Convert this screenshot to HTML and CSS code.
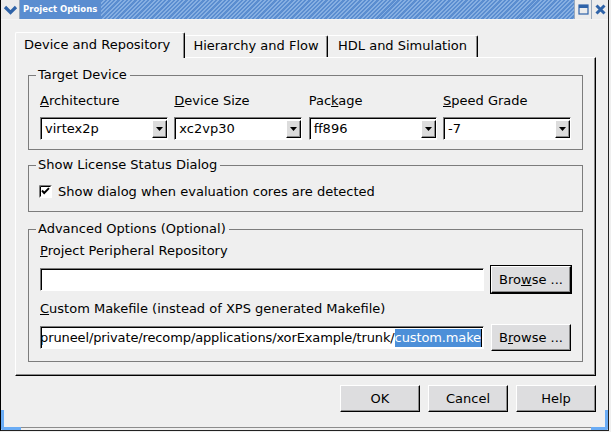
FILE: index.html
```html
<!DOCTYPE html>
<html>
<head>
<meta charset="utf-8">
<title>Project Options</title>
<link rel="stylesheet" href="styles.css">
</head>
<body>
<div class="window">
  <div class="titlebar">
    <div class="tb-menu">
      <svg width="15" height="12" viewBox="0 0 15 12"><path d="M2 3 L7.5 8.5 L13 3" fill="none" stroke="#2f63a8" stroke-width="3.2"/></svg>
    </div>
    <div class="tb-title">Project Options</div>
    <div class="tb-stripes"></div>
    <div class="tb-btn">
      <svg width="11" height="11" viewBox="0 0 11 11"><rect x="1" y="1" width="9" height="9" fill="none" stroke="#2f63a8" stroke-width="1.2"/><rect x="1" y="1" width="9" height="3" fill="#2f63a8"/></svg>
    </div>
    <div class="tb-btn">
      <svg width="11" height="11" viewBox="0 0 11 11"><path d="M1.5 1.5 L9.5 9.5 M9.5 1.5 L1.5 9.5" stroke="#2f63a8" stroke-width="3"/></svg>
    </div>
  </div>

  <div class="client">
    <div class="tabs">
      <div class="tab tab-1 active">Device and Repository</div>
      <div class="tab tab-2">Hierarchy and Flow</div>
      <div class="tab tab-3">HDL and Simulation</div>
    </div>

    <div class="panel">
      <fieldset class="group g-target">
        <legend>Target Device</legend>
        <div class="combo-grid">
          <div class="field">
            <div class="label"><u>A</u>rchitecture</div>
            <div class="combo"><span class="combo-text">virtex2p</span><span class="arrow"><svg width="7" height="4" viewBox="0 0 7 4"><polygon points="0,0 7,0 3.5,4" fill="#000"/></svg></span></div>
          </div>
          <div class="field">
            <div class="label"><u>D</u>evice Size</div>
            <div class="combo"><span class="combo-text">xc2vp30</span><span class="arrow"><svg width="7" height="4" viewBox="0 0 7 4"><polygon points="0,0 7,0 3.5,4" fill="#000"/></svg></span></div>
          </div>
          <div class="field">
            <div class="label">Pac<u>k</u>age</div>
            <div class="combo"><span class="combo-text">ff896</span><span class="arrow"><svg width="7" height="4" viewBox="0 0 7 4"><polygon points="0,0 7,0 3.5,4" fill="#000"/></svg></span></div>
          </div>
          <div class="field">
            <div class="label"><u>S</u>peed Grade</div>
            <div class="combo"><span class="combo-text">-7</span><span class="arrow"><svg width="7" height="4" viewBox="0 0 7 4"><polygon points="0,0 7,0 3.5,4" fill="#000"/></svg></span></div>
          </div>
        </div>
      </fieldset>

      <fieldset class="group g-license">
        <legend>Show License Status Dialog</legend>
        <div class="check-row">
          <svg class="checkbox" width="13" height="13" viewBox="0 0 13 13">
            <rect x="0" y="0" width="13" height="13" fill="#fff"/>
            <path d="M0.5 12.5 V0.5 H12.5" fill="none" stroke="#7c7c7c"/>
            <path d="M1.5 11.5 V1.5 H11.5" fill="none" stroke="#000"/>
            <path d="M3 5.5 L5.2 8 L10 3.2" fill="none" stroke="#000" stroke-width="1.9"/>
          </svg>
          <span>Show dialog when evaluation cores are detected</span>
        </div>
      </fieldset>

      <fieldset class="group g-adv">
        <legend>Advanced Options (Optional)</legend>
        <div class="label adv-label-1"><u>P</u>roject Peripheral Repository</div>
        <div class="file-row">
          <div class="input"></div>
          <button class="btn browse focused">Bro<u>w</u>se ...</button>
        </div>
        <div class="label adv-label-2"><u>C</u>ustom Makefile (instead of XPS generated Makefile)</div>
        <div class="file-row">
          <div class="input path"><span class="path-text">/home/pruneel/private/recomp/applications/xorExample/trunk/<span class="sel">custom.make</span></span><span class="caret"></span></div>
          <button class="btn browse">B<u>r</u>owse ...</button>
        </div>
      </fieldset>
    </div>

    <div class="actions">
      <button class="btn">OK</button>
      <button class="btn">Cancel</button>
      <button class="btn">Help</button>
    </div>
  </div>

  <div class="grip grip-left"></div>
  <div class="grip grip-right"></div>
</div>
</body>
</html>
```

FILE: styles.css
```css
html, body {
  margin: 0;
  padding: 0;
}

body {
  background: #efefef;
  font-family: "DejaVu Sans", "Noto Sans", sans-serif;
  font-size: 13px;
  color: #000;
}

.window {
  position: relative;
  width: 609px;
  height: 431px;
  box-sizing: border-box;
  border-left: 1px solid #000;
  border-right: 1px solid #222;
  border-bottom: 1px solid #222;
  padding-bottom: 2px;
  background: #efefef;
  display: flex;
  flex-direction: column;
}

/* ---------- title bar ---------- */
.titlebar {
  height: 19px;
  border-bottom: 1px solid #f4f4f4;
  display: flex;
  background: #5a8dd0;
  flex: none;
}

.tb-menu {
  width: 19px;
  box-sizing: border-box;
  background: #ececec;
  border-right: 1px solid #9aa9bb;
  display: flex;
  align-items: center;
  justify-content: center;
}

.tb-title {
  color: #fff;
  font-weight: bold;
  font-size: 8.5px;
  line-height: 19px;
  padding: 0 4px 0 3px;
  white-space: nowrap;
}

.tb-stripes {
  flex: 1;
  background: repeating-linear-gradient(135deg, #5a8dd0 0 1.6px, #86afe2 1.6px 3px);
}

.tb-btn {
  width: 17px;
  box-sizing: border-box;
  background: #ececec;
  border-left: 1px solid #9aa9bb;
  display: flex;
  align-items: center;
  justify-content: center;
}

/* ---------- client ---------- */
.client {
  height: 408px;
  box-sizing: border-box;
  padding: 12px 12px 0 14px;
  border-bottom: 1px solid #8c8c8c;
  flex: none;
}

.tabs {
  display: flex;
  align-items: flex-end;
  height: 25px;
}

.tab {
  box-sizing: border-box;
  height: 22px;
  border-top: 1px solid #fff;
  border-right: 1px solid #000;
  box-shadow: inset -1px 0 0 #8c8c8c;
  line-height: 19px;
  text-align: center;
  white-space: nowrap;
  border-top-right-radius: 2px;
}

.tab.active {
  height: 26px;
  margin-bottom: -1px;
  border-left: 1px solid #fff;
  border-top-left-radius: 2px;
  position: relative;
  z-index: 1;
  background: #efefef;
  line-height: 23px;
  text-align: left;
  padding-left: 8px;
}

.tab-1 { width: 170px; }
.tab-2 { width: 143px; }
.tab-3 { width: 150px; }

.panel {
  box-sizing: border-box;
  border-top: 1px solid #fff;
  border-left: 1px solid #fff;
  border-right: 1px solid #000;
  border-bottom: 1px solid #000;
  box-shadow: inset -1px -1px 0 #8c8c8c;
  padding: 9px 12px 13px 12px;
}

/* ---------- group boxes ---------- */
.group {
  margin: 0;
  border: 1px solid #7c7c7c;
  padding: 0 11px;
  min-width: 0;
}

.group legend {
  padding: 0 3px 0 2px;
  margin-left: -4px;
  line-height: 16px;
}

.label {
  line-height: 16px;
  white-space: nowrap;
}

.g-target {
  padding-bottom: 9px;
}

.combo-grid {
  display: grid;
  grid-template-columns: repeat(4, 128px);
  column-gap: 6.33px;
  margin-top: 10px;
}

.combo-grid .label {
  margin-bottom: 8px;
}

.combo {
  box-sizing: border-box;
  height: 23px;
  display: flex;
  align-items: center;
  background: #fff;
  border: 1px solid;
  border-color: #7c7c7c #fff #fff #7c7c7c;
  box-shadow: inset 1px 1px 0 #000;
  padding-left: 4px;
}

.combo-text {
  flex: 1;
  line-height: 16px;
}

.arrow {
  box-sizing: border-box;
  width: 15px;
  height: 18px;
  background: #dcdcdc;
  border: 1px solid;
  border-color: #fff #000 #000 #fff;
  box-shadow: inset -1px -1px 0 #8c8c8c;
  display: flex;
  align-items: center;
  justify-content: center;
}

.g-license {
  margin-top: 7px;
  padding-bottom: 12px;
}

.check-row {
  display: flex;
  align-items: center;
  height: 16px;
  margin-top: 10px;
  margin-left: -1px;
  white-space: nowrap;
}

.checkbox {
  margin-right: 6px;
  flex: none;
}

.g-adv {
  margin-top: 9px;
  padding-bottom: 10px;
}

.adv-label-1 {
  margin-top: 6px;
}

.adv-label-2 {
  margin-top: 8px;
}

.file-row {
  display: flex;
  align-items: center;
  gap: 7px;
  margin-top: 7px;
}

.input {
  flex: 1;
  box-sizing: border-box;
  height: 23px;
  background: #fff;
  border: 1px solid;
  border-color: #7c7c7c #fff #fff #7c7c7c;
  box-shadow: inset 1px 1px 0 #000;
}

.input.path {
  display: flex;
  justify-content: flex-end;
  align-items: center;
  overflow: hidden;
  white-space: nowrap;
  padding-right: 1px;
}

.path-text {
  line-height: 18px;
  letter-spacing: -0.12px;
}

.sel {
  display: inline-block;
  background: #4c8fd8;
  color: #fff;
  line-height: 18px;
}

.caret {
  flex: none;
  width: 1px;
  height: 18px;
  background: #000;
}

/* ---------- buttons ---------- */
.btn {
  box-sizing: border-box;
  width: 80px;
  height: 27px;
  margin: 0;
  padding: 0;
  background: #dddddf;
  border: 1px solid;
  border-color: #fff #000 #000 #fff;
  box-shadow: inset -1px -1px 0 #8c8c8c;
  font: inherit;
  color: #000;
  text-align: center;
  line-height: 24px;
  flex: none;
}

.btn.focused {
  outline: 1px solid #000;
}

.actions {
  display: flex;
  justify-content: flex-end;
  gap: 8px;
  margin-top: 9px;
}

/* ---------- resize grips (overlay on frame) ---------- */
.grip {
  position: absolute;
  bottom: 0;
  width: 20px;
  height: 20px;
  box-sizing: border-box;
  border-bottom: 3px solid #6aacf5;
}

.grip-left {
  left: 0;
  border-left: 3px solid #6aacf5;
  border-bottom-left-radius: 2px;
}

.grip-right {
  right: 0;
  width: 17px;
  border-right: 3px solid #6aacf5;
  border-bottom-right-radius: 2px;
}
```
